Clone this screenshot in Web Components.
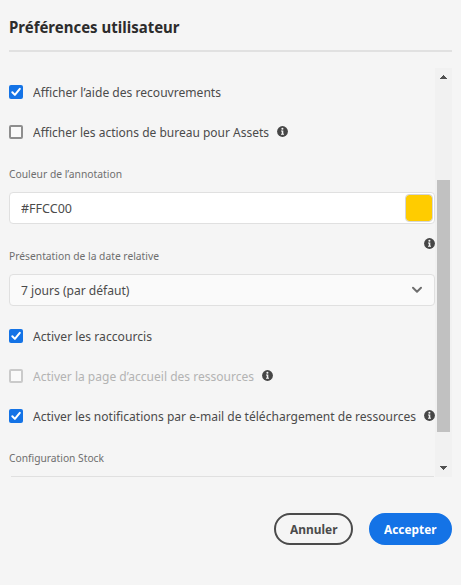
<!DOCTYPE html>
<html lang="fr"><head><meta charset="utf-8"><title>Préférences utilisateur</title>
<style>html,body{margin:0;height:585px;overflow:hidden;background:#f5f5f5}body{font:13px/20px "Noto Sans","Open Sans",sans-serif;color:#4b4b4b}</style></head>
<body><user-preferences></user-preferences>
<script>
// Text condensed horizontally to the width given in its "w" attribute.
class FitText extends HTMLElement{
  connectedCallback(){
    const r=this.attachShadow({mode:'open'});
    r.innerHTML='<style>:host{display:block;flex:none;white-space:nowrap}span{display:inline-block;transform-origin:0 50%}</style><span><slot></slot></span>';
    const w=+this.getAttribute('w');this.style.width=w+'px';
    const s=r.querySelector('span');
    s.style.transform='scaleX('+w/s.getBoundingClientRect().width+')';
  }
}
customElements.define('fit-text',FitText);

class InfoIcon extends HTMLElement{
  connectedCallback(){
    this.attachShadow({mode:'open'}).innerHTML='<style>:host{display:block;flex:none;width:11px;height:11px}svg{display:block}</style><svg width="11" height="11" viewBox="0 0 11 11"><circle cx="5.5" cy="5.5" r="5.4" fill="#464646"/><circle cx="5.4" cy="2.7" r="1.05" fill="#f5f5f5"/><path d="M4 4.5h2.3v3.2H7v1H4v-1h.8V5.4H4z" fill="#f5f5f5"/></svg>';
  }
}
customElements.define('info-icon',InfoIcon);

class PrefCheck extends HTMLElement{
  connectedCallback(){
    const on=this.hasAttribute('checked');
    this.attachShadow({mode:'open'}).innerHTML='<style>:host{display:flex;align-items:center;height:40px}:host([disabled]){color:#b3b3b3}i{box-sizing:border-box;flex:none;width:14px;height:14px;border:2px solid #8e8e8e;border-radius:2px;background:#fafafa;margin-right:9.5px}:host([checked]) i{border:0;background:#1473e6}:host([disabled]) i{border-color:#cacaca}svg{display:block}::slotted(info-icon){margin-left:8.5px;margin-bottom:1px}</style><i>'+(on?'<svg width="14" height="14" viewBox="0 0 14 14"><path d="M3.3 7.2 5.9 9.9 10.8 3.8" fill="none" stroke="#fff" stroke-width="2" stroke-linecap="round" stroke-linejoin="round"/></svg>':'')+'</i><slot></slot>';
  }
}
customElements.define('pref-check',PrefCheck);

class PrefField extends HTMLElement{
  connectedCallback(){
    this.attachShadow({mode:'open'}).innerHTML='<style>:host{display:block}.l{height:20px;font-size:11.5px;color:#6e6e6e;margin-bottom:8px}.b{box-sizing:border-box;height:32px;border:1px solid #e0e0e0;border-radius:4px;background:#fafafa;display:flex;align-items:center;justify-content:space-between;padding:0 1px 0 11px}:host([color]) .b{background:#fff}</style><div class="l"><slot name="label"></slot></div><div class="b"><slot></slot></div>';
  }
}
customElements.define('pref-field',PrefField);

class PrefButton extends HTMLElement{
  connectedCallback(){
    this.attachShadow({mode:'open'}).innerHTML='<style>:host{box-sizing:border-box;display:flex;align-items:center;justify-content:center;width:79px;height:32px;border:2px solid #4b4b4b;border-radius:16px;font-weight:700;color:#4b4b4b}:host([primary]){width:83px;border-color:#1473e6;background:#1473e6;color:#fff}</style><slot></slot>';
  }
}
customElements.define('pref-button',PrefButton);

class ScrollTrack extends HTMLElement{
  connectedCallback(){
    this.attachShadow({mode:'open'}).innerHTML='<style>:host{box-sizing:border-box;width:17px;background:#f1f1f1;display:grid;grid-template-rows:17px 95px 252px 1fr 17px;justify-items:center}svg{display:block}.t{grid-row:3;width:13px;background:#c1c1c1}.d{grid-row:5}</style><svg width="17" height="17" viewBox="0 0 17 17" shape-rendering="crispEdges"><path d="M8 7h1v1H8zM7 8h3v1H7zM6 9h5v1H6zM5 10h7v1H5z" fill="#505050"/></svg><div class="t"></div><svg class="d" width="17" height="17" viewBox="0 0 17 17" shape-rendering="crispEdges"><path d="M5 6h7v1H5zM6 7h5v1H6zM7 8h3v1H7zM8 9h1v1H8z" fill="#505050"/></svg>';
  }
}
customElements.define('scroll-track',ScrollTrack);

class UserPreferences extends HTMLElement{
  connectedCallback(){
    this.attachShadow({mode:'open'}).innerHTML=`<style>
:host{display:block;box-sizing:border-box;width:461px;height:585px;padding:0 9px}
header{box-sizing:border-box;height:52px;padding-top:15px;border-bottom:2px solid #e1e1e1;font-size:16px;line-height:24px;font-weight:700;color:#2c2c2c}
main{display:flex;height:409px;margin-top:16px}
section{width:426px;padding-top:4px;box-sizing:border-box}
.color{margin-top:12px}.swatch{box-sizing:border-box;width:28px;height:28px;border:1px solid #d5d5d5;border-radius:4px;background:#fc0;background-clip:padding-box}
.help{display:flex;justify-content:flex-end;height:22px;padding-top:14px;box-sizing:border-box}
.chev{margin-right:10px}
.date{margin-bottom:10px}
.stock{font-size:11.5px;color:#6e6e6e;padding-top:12px;height:28px}
.rule{height:1px;background:#e0e0e0;margin:0 1px 0 2px}
footer{display:flex;justify-content:flex-end;gap:16px;padding-top:36px}
</style>
<header><fit-text w="170.5">Préférences utilisateur</fit-text></header>
<main><section>
<pref-check checked><fit-text w="188">Afficher l’aide des recouvrements</fit-text></pref-check>
<pref-check><fit-text w="236">Afficher les actions de bureau pour Assets</fit-text><info-icon></info-icon></pref-check>
<pref-field class="color" color><fit-text slot="label" w="113">Couleur de l’annotation</fit-text><fit-text w="51">#FFCC00</fit-text><div class="swatch"></div></pref-field>
<div class="help"><info-icon></info-icon></div>
<pref-field class="date"><fit-text slot="label" w="150">Présentation de la date relative</fit-text><fit-text w="108.5">7 jours (par défaut)</fit-text><svg class="chev" width="12" height="8" viewBox="0 0 12 8"><path d="M2 1.8 6 5.7 10 1.8" fill="none" stroke="#6e6e6e" stroke-width="2" stroke-linecap="round" stroke-linejoin="round"/></svg></pref-field>
<pref-check checked><fit-text w="119">Activer les raccourcis</fit-text></pref-check>
<pref-check disabled><fit-text w="221">Activer la page d’accueil des ressources</fit-text><info-icon></info-icon></pref-check>
<pref-check checked><fit-text w="383">Activer les notifications par e-mail de téléchargement de ressources</fit-text><info-icon></info-icon></pref-check>
<div class="stock"><fit-text w="95">Configuration Stock</fit-text></div><div class="rule"></div>
</section><scroll-track></scroll-track></main>
<footer><pref-button><fit-text w="47.5">Annuler</fit-text></pref-button><pref-button primary><fit-text w="52.5">Accepter</fit-text></pref-button></footer>`;
  }
}
customElements.define('user-preferences',UserPreferences);
</script></body></html>
